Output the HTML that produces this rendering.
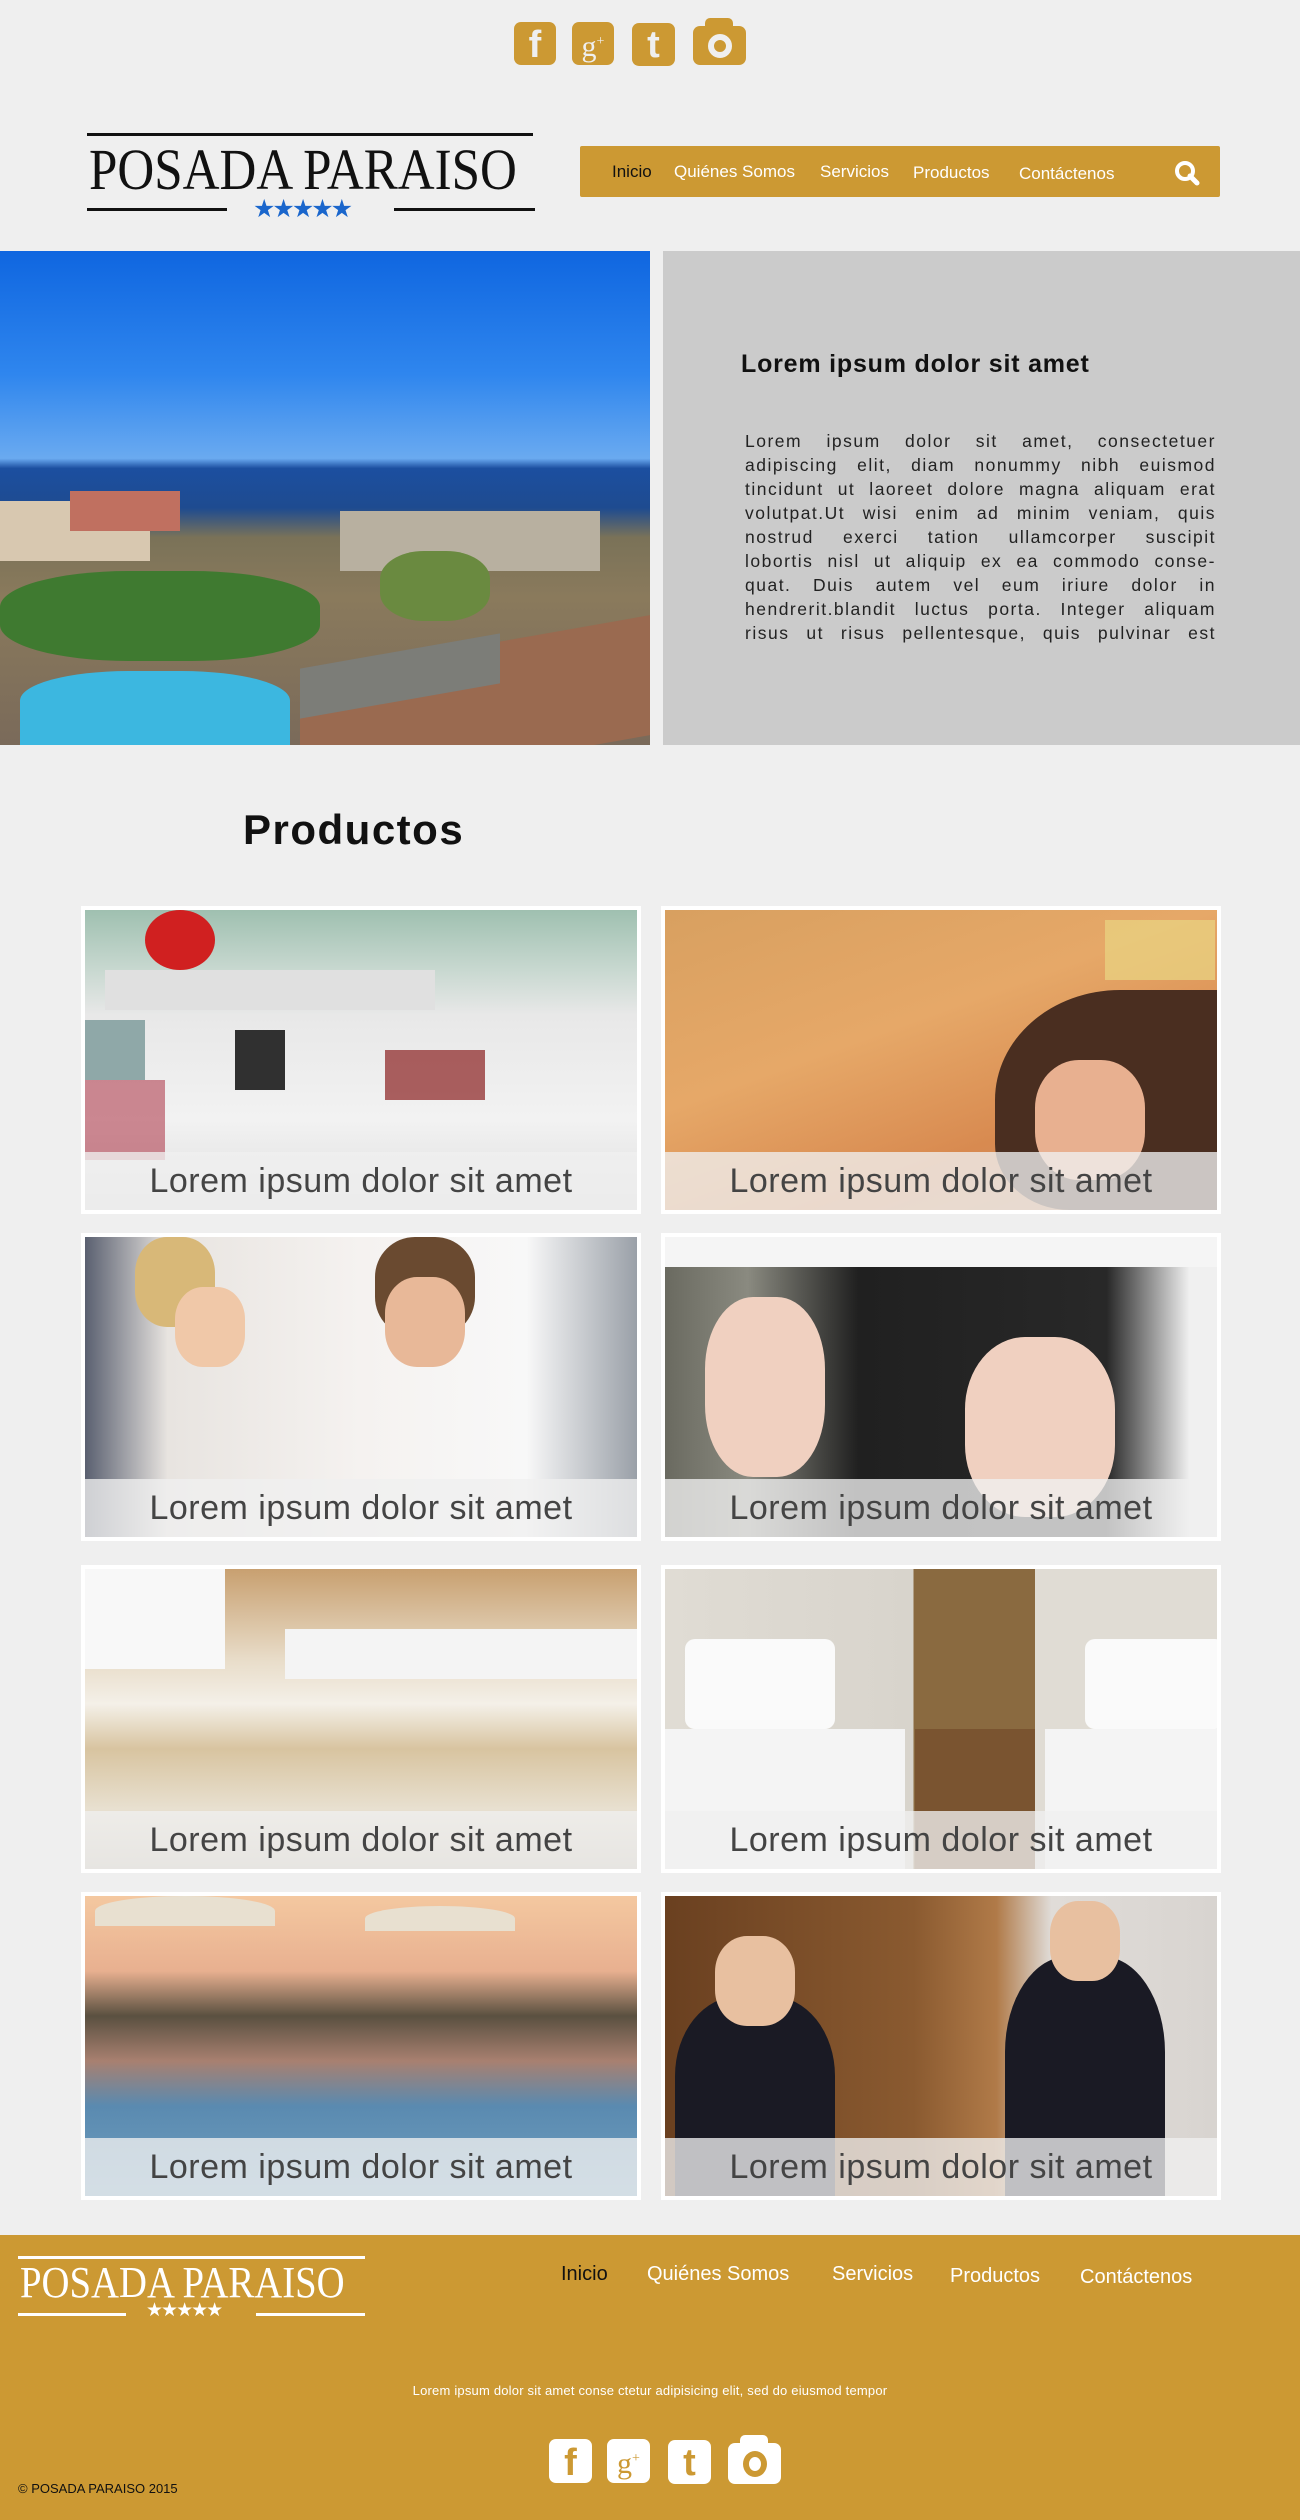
<!DOCTYPE html>
<html><head><meta charset="utf-8"><style>
*{margin:0;padding:0;box-sizing:border-box}
body{width:1300px;height:2520px;background:#efefef;font-family:"Liberation Sans",sans-serif;position:relative;overflow:hidden}
.abs{position:absolute}
.ic{position:absolute;border-radius:7px;background:#cc9933;color:#efefef;font-weight:bold;text-align:center}
.logo-t{font-family:"Liberation Serif",serif;white-space:nowrap;transform-origin:left top}
.nav span{position:absolute;top:14px;font-size:17px;color:#fff;white-space:nowrap}
.card{position:absolute;width:560px;height:308px;background:#fff;padding:4px}
.card .img{width:100%;height:100%;position:relative;overflow:hidden}
.card .cap{position:absolute;left:0;right:0;bottom:0;height:58px;background:rgba(240,240,240,.78);color:#444;font-size:34px;text-align:center;line-height:58px;white-space:nowrap;letter-spacing:.5px}
.fn span{position:absolute;font-size:20px;color:#fff;white-space:nowrap}
.par div{text-align:justify;text-align-last:justify;white-space:nowrap;height:24px}
</style></head><body>

<div class="ic" style="left:514px;top:22px;width:42px;height:43px;font-size:38px;line-height:46px">f</div>
<div class="ic" style="left:572px;top:22px;width:42px;height:43px;font-size:30px;line-height:40px;font-family:'Liberation Serif';font-weight:normal">g<sup style="font-size:14px">+</sup></div>
<div class="ic" style="left:632px;top:23px;width:43px;height:43px;font-size:38px;line-height:44px">t</div>
<div class="ic" style="left:693px;top:26px;width:53px;height:39px"></div>
<div class="abs" style="left:705px;top:18px;width:28px;height:10px;background:#cc9933;border-radius:5px 5px 0 0"></div>
<div class="abs" style="left:708px;top:34px;width:24px;height:24px;border:6px solid #efefef;border-radius:50%"></div>

<div class="abs" style="left:87px;top:133px;width:446px;height:3px;background:#111"></div>
<div class="abs logo-t" style="left:89px;top:136px;font-size:58px;color:#111;transform:scaleX(.88)">POSADA PARAISO</div>
<div class="abs" style="left:87px;top:208px;width:140px;height:3px;background:#111"></div>
<div class="abs" style="left:394px;top:208px;width:141px;height:3px;background:#111"></div>
<div class="abs" style="left:253px;top:194px;font-size:25px;color:#1a66cc;letter-spacing:-3px">★★★★★</div>

<div class="abs nav" style="left:580px;top:146px;width:640px;height:51px;background:#cc9933;border-radius:2px">
<span style="left:32px;color:#111;top:16px">Inicio</span>
<span style="left:94px;top:16px">Quiénes Somos</span>
<span style="left:240px;top:16px">Servicios</span>
<span style="left:333px;top:17px">Productos</span>
<span style="left:439px;top:18px">Contáctenos</span>
<svg class="abs" style="left:593px;top:13px" width="28" height="28" viewBox="0 0 28 28"><circle cx="12" cy="12" r="8" fill="none" stroke="#fff" stroke-width="4"/><path d="M17 17l7 7" stroke="#fff" stroke-width="5" stroke-linecap="round"/></svg>
</div>

<div class="abs" style="left:0;top:251px;width:650px;height:494px;overflow:hidden;background:linear-gradient(180deg,#0f66e0 0%,#2f86ee 25%,#6aaaf0 42%,#1c4fa0 44%,#1e4b90 52%,#7a7258 58%,#8a7a5c 70%,#7a6a5a 100%)">
<div class="abs" style="left:0;top:250px;width:150px;height:60px;background:#d8c8b0"></div>
<div class="abs" style="left:70px;top:240px;width:110px;height:40px;background:#c07060"></div>
<div class="abs" style="left:0;top:320px;width:320px;height:90px;background:#3f7a30;border-radius:40%"></div>
<div class="abs" style="left:340px;top:260px;width:260px;height:60px;background:#b8b0a0"></div>
<div class="abs" style="left:380px;top:300px;width:110px;height:70px;background:#6a8a40;border-radius:40%"></div>
<div class="abs" style="left:20px;top:420px;width:270px;height:74px;background:#3cb7e0;border-radius:40% 40% 0 0"></div>
<div class="abs" style="left:300px;top:395px;width:350px;height:120px;background:#9a6a50;transform:skewY(-10deg)"></div>
<div class="abs" style="left:300px;top:400px;width:200px;height:50px;background:#7c7d78;transform:skewY(-10deg)"></div>
</div>
<div class="abs" style="left:663px;top:251px;width:637px;height:494px;background:#cbcbcb">
<div class="abs" style="left:78px;top:99px;font-size:25px;font-weight:bold;color:#111;letter-spacing:.8px">Lorem ipsum dolor sit amet</div>
<div class="abs par" style="left:82px;top:178px;width:471px;font-size:17.5px;line-height:24px;color:#222;letter-spacing:1.5px">
<div>Lorem ipsum dolor sit amet, consectetuer</div>
<div>adipiscing elit, diam nonummy nibh euismod</div>
<div>tincidunt ut laoreet dolore magna aliquam erat</div>
<div>volutpat.Ut wisi enim ad minim veniam, quis</div>
<div>nostrud exerci tation ullamcorper suscipit</div>
<div>lobortis nisl ut aliquip ex ea commodo conse-</div>
<div>quat. Duis autem vel eum iriure dolor in</div>
<div>hendrerit.blandit luctus porta. Integer aliquam</div>
<div>risus ut risus pellentesque, quis pulvinar est</div>
</div>
</div>

<div class="abs" style="left:243px;top:806px;font-size:42px;font-weight:bold;color:#111;letter-spacing:1.5px">Productos</div>

<div class="card" style="left:81px;top:906px"><div class="img" style="background:linear-gradient(180deg,#9fc0b0 0%,#c8d8d0 20%,#e8e8e8 35%,#f2f2f2 70%,#ddd 100%)">
<div class="abs" style="left:60px;top:0;width:70px;height:60px;background:#d02020;border-radius:50%"></div>
<div class="abs" style="left:20px;top:60px;width:330px;height:40px;background:#e0e0e0"></div>
<div class="abs" style="left:0;top:110px;width:60px;height:60px;background:#8fa8a8"></div>
<div class="abs" style="left:150px;top:120px;width:50px;height:60px;background:#303030"></div>
<div class="abs" style="left:300px;top:140px;width:100px;height:50px;background:#8a2020;opacity:.7"></div>
<div class="abs" style="left:0;top:170px;width:80px;height:80px;background:#b04050;opacity:.6"></div>
<div class="cap">Lorem ipsum dolor sit amet</div></div></div>
<div class="card" style="left:661px;top:906px"><div class="img" style="background:linear-gradient(160deg,#d8a060 0%,#e6a868 40%,#d88a50 70%,#c09070 100%)">
<div class="abs" style="left:330px;top:80px;width:250px;height:220px;background:#4a2e20;border-radius:50% 0 0 30%"></div>
<div class="abs" style="left:370px;top:150px;width:110px;height:120px;background:#e8b090;border-radius:40%"></div>
<div class="abs" style="left:440px;top:10px;width:110px;height:60px;background:#e8d080;opacity:.8"></div>
<div class="cap">Lorem ipsum dolor sit amet</div></div></div>

<div class="card" style="left:81px;top:1233px"><div class="img" style="background:linear-gradient(90deg,#5a6070 0%,#e8e4e0 15%,#f5f2f0 50%,#f8f8f8 80%,#9aa0a8 100%)">
<div class="abs" style="left:50px;top:0;width:80px;height:90px;background:#d8b878;border-radius:40%"></div>
<div class="abs" style="left:290px;top:0;width:100px;height:100px;background:#6a4a30;border-radius:40%"></div>
<div class="abs" style="left:300px;top:40px;width:80px;height:90px;background:#e8b898;border-radius:40%"></div>
<div class="abs" style="left:90px;top:50px;width:70px;height:80px;background:#f0c8a8;border-radius:40%"></div>
<div class="cap">Lorem ipsum dolor sit amet</div></div></div>
<div class="card" style="left:661px;top:1233px"><div class="img" style="background:linear-gradient(90deg,#6a6a60 0%,#8a8a80 15%,#202020 35%,#282828 80%,#f0f0f0 95%)">
<div class="abs" style="left:40px;top:60px;width:120px;height:180px;background:#f0d0c0;border-radius:40%"></div>
<div class="abs" style="left:300px;top:100px;width:150px;height:180px;background:#f0d0c0;border-radius:40%"></div>
<div class="abs" style="left:0;top:0;width:560px;height:30px;background:#f5f5f5"></div>
<div class="cap">Lorem ipsum dolor sit amet</div></div></div>

<div class="card" style="left:81px;top:1565px"><div class="img" style="background:linear-gradient(180deg,#c8a070 0%,#e8dcc8 30%,#f4f0e8 45%,#d8c4a0 60%,#e8e0d0 80%,#c8c0b0 100%)">
<div class="abs" style="left:0;top:0;width:140px;height:100px;background:#f8f8f8"></div>
<div class="abs" style="left:200px;top:60px;width:360px;height:50px;background:#f4f4f4"></div>
<div class="cap">Lorem ipsum dolor sit amet</div></div></div>
<div class="card" style="left:661px;top:1565px"><div class="img" style="background:linear-gradient(90deg,#e0dcd4 0%,#d8d4cc 45%,#8a6a40 45%,#8a6a40 67%,#e0dcd4 67%)">
<div class="abs" style="left:20px;top:70px;width:150px;height:90px;background:#fafafa;border-radius:10px"></div>
<div class="abs" style="left:420px;top:70px;width:140px;height:90px;background:#fafafa;border-radius:10px"></div>
<div class="abs" style="left:0;top:160px;width:240px;height:140px;background:#f4f4f4"></div>
<div class="abs" style="left:380px;top:160px;width:180px;height:140px;background:#f4f4f4"></div>
<div class="abs" style="left:250px;top:160px;width:120px;height:140px;background:#7a5430"></div>
<div class="cap">Lorem ipsum dolor sit amet</div></div></div>

<div class="card" style="left:81px;top:1892px"><div class="img" style="background:linear-gradient(180deg,#f4c8a0 0%,#e8b090 25%,#5a5040 40%,#a88070 55%,#5a8ab0 70%,#70a0c0 100%)">
<div class="abs" style="left:10px;top:0;width:180px;height:30px;background:#e8e0d0;border-radius:50% 50% 0 0"></div>
<div class="abs" style="left:280px;top:10px;width:150px;height:25px;background:#e8e0d0;border-radius:50% 50% 0 0"></div>
<div class="cap">Lorem ipsum dolor sit amet</div></div></div>
<div class="card" style="left:661px;top:1892px"><div class="img" style="background:linear-gradient(90deg,#6a4020 0%,#8a5a30 45%,#b07a48 60%,#e0dcd8 70%,#d8d4d0 100%)">
<div class="abs" style="left:10px;top:100px;width:160px;height:200px;background:#1a1a24;border-radius:40% 40% 0 0"></div>
<div class="abs" style="left:50px;top:40px;width:80px;height:90px;background:#e8c0a0;border-radius:40%"></div>
<div class="abs" style="left:340px;top:60px;width:160px;height:240px;background:#1a1a24;border-radius:40% 40% 0 0"></div>
<div class="abs" style="left:385px;top:5px;width:70px;height:80px;background:#e8c0a0;border-radius:40%"></div>
<div class="cap">Lorem ipsum dolor sit amet</div></div></div>

<div class="abs" style="left:0;top:2235px;width:1300px;height:285px;background:#cc9933">
<div class="abs" style="left:18px;top:21px;width:347px;height:3px;background:#fff"></div>
<div class="abs logo-t" style="left:20px;top:22px;font-size:44px;color:#fff;transform:scaleX(.88)">POSADA PARAISO</div>
<div class="abs" style="left:18px;top:78px;width:108px;height:3px;background:#fff"></div>
<div class="abs" style="left:256px;top:78px;width:109px;height:3px;background:#fff"></div>
<div class="abs" style="left:146px;top:64px;font-size:19px;color:#fff;letter-spacing:-2px">★★★★★</div>
<div class="fn">
<span style="left:561px;top:28px;color:#111">Inicio</span>
<span style="left:647px;top:28px">Quiénes Somos</span>
<span style="left:832px;top:28px">Servicios</span>
<span style="left:950px;top:30px">Productos</span>
<span style="left:1080px;top:31px">Contáctenos</span>
</div>
<div class="abs" style="left:0;width:1300px;top:148px;text-align:center;font-size:13px;color:#fff;letter-spacing:.2px">Lorem ipsum dolor sit amet conse ctetur adipisicing elit, sed do eiusmod tempor</div>
<div class="ic" style="left:549px;top:204px;width:43px;height:44px;background:#fff;color:#cc9933;font-size:38px;line-height:48px">f</div>
<div class="ic" style="left:607px;top:204px;width:43px;height:44px;background:#fff;color:#cc9933;font-size:30px;line-height:40px;font-family:'Liberation Serif';font-weight:normal">g<sup style="font-size:14px">+</sup></div>
<div class="ic" style="left:668px;top:205px;width:43px;height:44px;background:#fff;color:#cc9933;font-size:38px;line-height:46px">t</div>
<div class="ic" style="left:728px;top:208px;width:53px;height:41px;background:#fff"></div>
<div class="abs" style="left:740px;top:200px;width:28px;height:10px;background:#fff;border-radius:5px 5px 0 0"></div>
<div class="abs" style="left:743px;top:216px;width:24px;height:26px;border:6px solid #cc9933;border-radius:50%"></div>
<div class="abs" style="left:18px;top:246px;font-size:13px;color:#111">© POSADA PARAISO 2015</div>
</div>
</body></html>
